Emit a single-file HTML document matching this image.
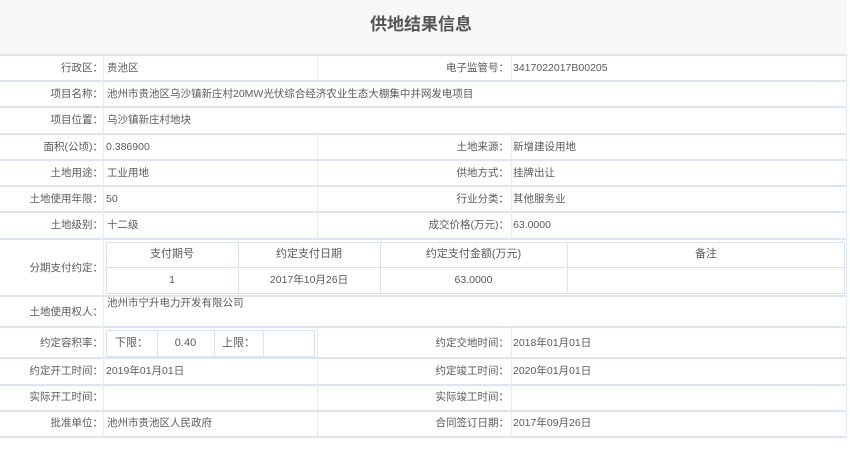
<!DOCTYPE html>
<html><head><meta charset="utf-8"><style>
*{margin:0;padding:0;box-sizing:border-box}
body{width:850px;height:463px;background:#fff;position:relative;overflow:hidden;font-family:"Liberation Sans","Noto Sans CJK SC",sans-serif;font-size:10.5px;color:#5a5a5a}
.h{position:absolute;left:0;width:847px;height:2px;background:#dbe6f2}
.v{position:absolute;width:1px;background:#e3ebf4}
.t{position:absolute;white-space:nowrap;line-height:12px}
.r{text-align:right}
.c{text-align:center}
.box{position:absolute;border:1px solid #d6e2ef}
</style></head><body>
<div style="position:absolute;left:0;top:0;width:847px;height:55px;background:#f7f7f7"></div>
<div class="t" style="left:370px;top:15px;font-size:17px;line-height:20px;font-weight:bold;color:#555">供地结果信息</div>

<div class="h" style="top:54px"></div>
<div class="h" style="top:80px"></div>
<div class="h" style="top:106px"></div>
<div class="h" style="top:133px"></div>
<div class="h" style="top:159px"></div>
<div class="h" style="top:185px"></div>
<div class="h" style="top:211px"></div>
<div class="h" style="top:238px"></div>
<div class="h" style="top:295px"></div>
<div class="h" style="top:326px"></div>
<div class="h" style="top:357px"></div>
<div class="h" style="top:384px"></div>
<div class="h" style="top:410px"></div>
<div class="h" style="top:436px"></div>

<div class="v" style="left:103px;top:55px;height:382px"></div>
<div class="v" style="left:846px;top:55px;height:382px"></div>
<div class="v" style="left:317px;top:55px;height:26px"></div>
<div class="v" style="left:511px;top:55px;height:26px"></div>
<div class="v" style="left:317px;top:134px;height:105px"></div>
<div class="v" style="left:511px;top:134px;height:105px"></div>
<div class="v" style="left:317px;top:327px;height:110px"></div>
<div class="v" style="left:511px;top:327px;height:110px"></div>

<div class="t r" style="right:747px;top:62px">行政区：</div>
<div class="t r" style="right:747px;top:88px">项目名称：</div>
<div class="t r" style="right:747px;top:114px">项目位置：</div>
<div class="t r" style="right:747px;top:141px">面积(公顷)：</div>
<div class="t r" style="right:747px;top:167px">土地用途：</div>
<div class="t r" style="right:747px;top:193px">土地使用年限：</div>
<div class="t r" style="right:747px;top:219px">土地级别：</div>
<div class="t r" style="right:747px;top:262px">分期支付约定：</div>
<div class="t r" style="right:747px;top:306px">土地使用权人：</div>
<div class="t r" style="right:747px;top:337px">约定容积率：</div>
<div class="t r" style="right:747px;top:365px">约定开工时间：</div>
<div class="t r" style="right:747px;top:391px">实际开工时间：</div>
<div class="t r" style="right:747px;top:417px">批准单位：</div>

<div class="t" style="left:107px;top:62px">贵池区</div>
<div class="t" style="left:107px;top:88px">池州市贵池区乌沙镇新庄村20MW光伏综合经济农业生态大棚集中并网发电项目</div>
<div class="t" style="left:107px;top:114px">乌沙镇新庄村地块</div>
<div class="t" style="left:106px;top:141px">0.386900</div>
<div class="t" style="left:107px;top:167px">工业用地</div>
<div class="t" style="left:106px;top:193px">50</div>
<div class="t" style="left:107px;top:219px">十二级</div>
<div class="t" style="left:107px;top:297px">池州市宁升电力开发有限公司</div>
<div class="t" style="left:106px;top:365px">2019年01月01日</div>
<div class="t" style="left:107px;top:417px">池州市贵池区人民政府</div>

<div class="t r" style="right:341px;top:62px">电子监管号：</div>
<div class="t r" style="right:341px;top:141px">土地来源：</div>
<div class="t r" style="right:341px;top:167px">供地方式：</div>
<div class="t r" style="right:341px;top:193px">行业分类：</div>
<div class="t r" style="right:341px;top:219px">成交价格(万元)：</div>
<div class="t r" style="right:341px;top:337px">约定交地时间：</div>
<div class="t r" style="right:341px;top:365px">约定竣工时间：</div>
<div class="t r" style="right:341px;top:391px">实际竣工时间：</div>
<div class="t r" style="right:341px;top:417px">合同签订日期：</div>

<div class="t" style="left:513px;top:62px">3417022017B00205</div>
<div class="t" style="left:513px;top:141px">新增建设用地</div>
<div class="t" style="left:513px;top:167px">挂牌出让</div>
<div class="t" style="left:513px;top:193px">其他服务业</div>
<div class="t" style="left:513px;top:219px">63.0000</div>
<div class="t" style="left:513px;top:337px">2018年01月01日</div>
<div class="t" style="left:513px;top:365px">2020年01月01日</div>
<div class="t" style="left:513px;top:417px">2017年09月26日</div>

<div class="box" style="left:106px;top:242px;width:739px;height:52px"></div>
<div style="position:absolute;left:107px;top:267px;width:737px;height:1px;background:#d6e2ef"></div>
<div class="v" style="left:238px;top:242px;height:52px;background:#d6e2ef"></div>
<div class="v" style="left:380px;top:242px;height:52px;background:#d6e2ef"></div>
<div class="v" style="left:567px;top:242px;height:52px;background:#d6e2ef"></div>
<div class="t c" style="left:106px;width:132px;top:248px;font-size:11px">支付期号</div>
<div class="t c" style="left:238px;width:142px;top:248px;font-size:11px">约定支付日期</div>
<div class="t c" style="left:380px;width:187px;top:248px;font-size:11px">约定支付金额(万元)</div>
<div class="t c" style="left:567px;width:278px;top:248px;font-size:11px">备注</div>
<div class="t c" style="left:106px;width:132px;top:274px">1</div>
<div class="t c" style="left:238px;width:142px;top:274px">2017年10月26日</div>
<div class="t c" style="left:380px;width:187px;top:274px">63.0000</div>

<div class="box" style="left:106px;top:330px;width:209px;height:27px"></div>
<div class="v" style="left:157px;top:330px;height:27px;background:#d6e2ef"></div>
<div class="v" style="left:214px;top:330px;height:27px;background:#d6e2ef"></div>
<div class="v" style="left:263px;top:330px;height:27px;background:#d6e2ef"></div>
<div class="t c" style="left:106px;width:51px;top:337px;font-size:11px">下限：</div>
<div class="t c" style="left:157px;width:57px;top:337px;font-size:11px">0.40</div>
<div class="t c" style="left:214px;width:49px;top:337px;font-size:11px">上限：</div>
</body></html>
